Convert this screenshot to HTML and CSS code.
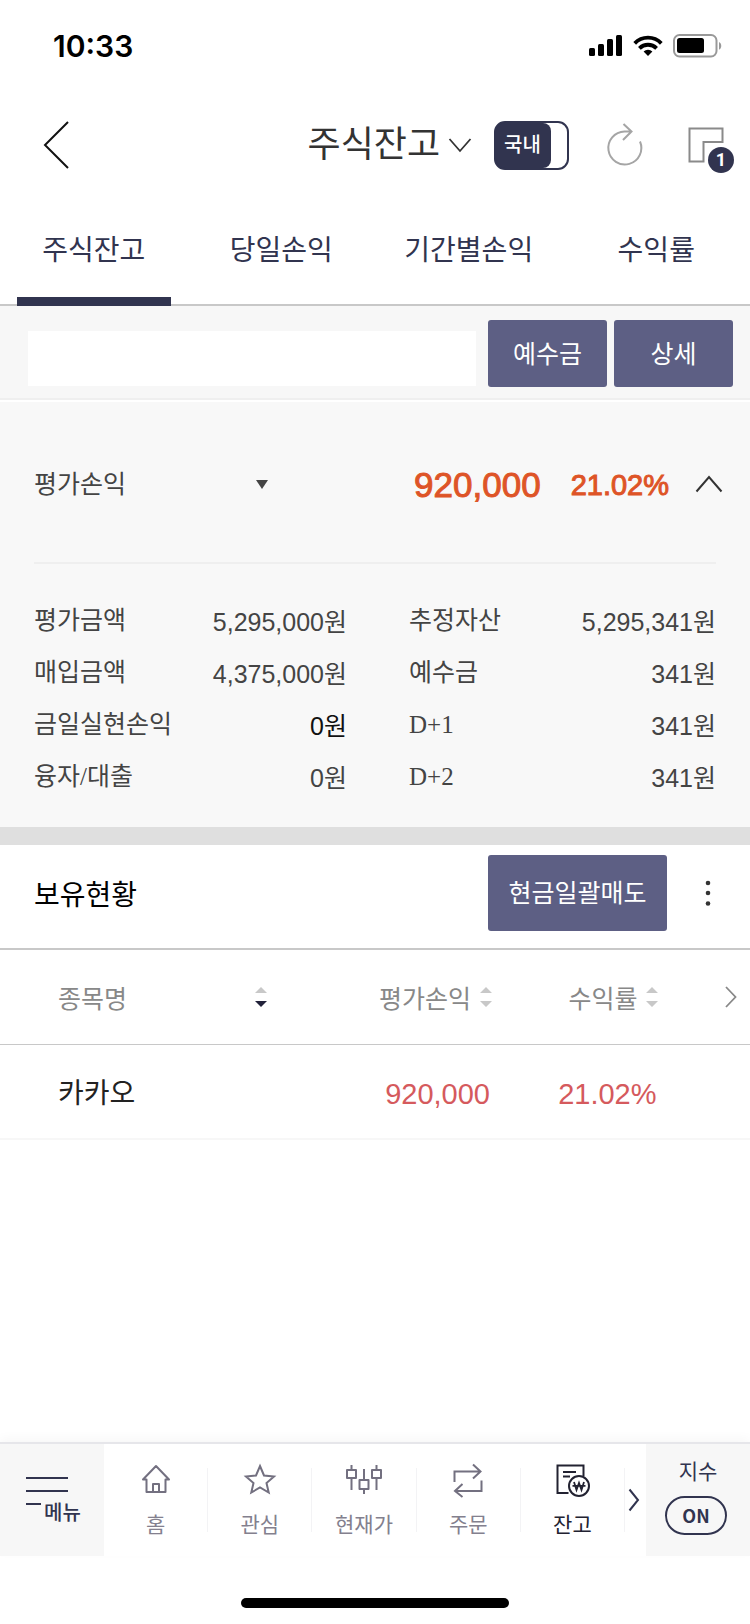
FILE: index.html
```html
<!DOCTYPE html>
<html lang="ko">

<head>
	<meta charset="UTF-8">
	<meta name="viewport" content="width=device-width, initial-scale=1.0">
	<title>주식잔고</title>
	<link rel="stylesheet" href="styles.css">
</head>

<body>
	<!-- Status bar -->
	<div class="status-bar">
		<span class="status-time">10:33</span>
		<div class="status-icons">
			<svg width="34" height="22" viewBox="0 0 34 22">
				<rect x="0" y="13" width="6" height="8" rx="1.5" />
				<rect x="9" y="9" width="6" height="12" rx="1.5" />
				<rect x="18" y="4" width="6" height="17" rx="1.5" />
				<rect x="27" y="0" width="6" height="21" rx="1.5" />
			</svg>
			<svg width="30" height="22" viewBox="0 0 30 22" fill="none" stroke="#000" stroke-width="3.8">
				<path d="M1.7 8.3a18.6 18.6 0 0 1 26.6 0" />
				<path d="M6.4 13.3a12.2 12.2 0 0 1 17.2 0" />
				<path d="M15 21l-4.4-4.5a6.4 6.4 0 0 1 8.8 0z" fill="#000" stroke="none" />
			</svg>
			<svg width="49" height="24" viewBox="0 0 49 24">
				<rect x="1" y="1" width="42.500" height="21.500" rx="5.500" fill="none" stroke="#999" stroke-width="2" />
				<rect x="4" y="4" width="27" height="15" rx="2.500" />
				<path d="M46 8c3 1.200 3 6.500 0 7.700z" fill="#999" />
			</svg>
		</div>
	</div>

	<!-- Header -->
	<header class="header">
		<button type="button" class="icon-btn back" aria-label="뒤로">
			<svg width="26" height="48" viewBox="0 0 26 48" fill="none" stroke="#111" stroke-width="2">
				<path d="M25 1L2 24l23 23" />
			</svg>
		</button>
		<button type="button" class="icon-btn title">
			<span>주식잔고</span>
			<svg width="24" height="16" viewBox="0 0 24 16" fill="none" stroke="#333" stroke-width="1.800">
				<path d="M1.500 2L12 14 22.500 2" />
			</svg>
		</button>
		<button type="button" class="market-switch" role="switch" aria-checked="true"><span>국내</span></button>
		<button type="button" class="icon-btn refresh" aria-label="새로고침">
			<svg width="36" height="44" viewBox="0 0 36 44" fill="none" stroke="#a5a5a5" stroke-width="2">
				<path d="M33 18.500A16.500 16.500 0 1 1 17.500 8.500h7M16.500 1l8 7.500-8.500 8.500" />
			</svg>
		</button>
		<button type="button" class="icon-btn windows" aria-label="화면목록">
			<svg width="36" height="36" viewBox="0 0 36 36" fill="none" stroke="#8a8a8a" stroke-width="2">
				<path d="M1.500 1.500h33v13.500H15.500V34.500h-14z" />
			</svg>
			<span class="badge">1</span>
		</button>
	</header>

	<!-- Tabs -->
	<nav class="tabs">
		<a href="#balance" class="tab active">주식잔고</a>
		<a href="#today" class="tab">당일손익</a>
		<a href="#period" class="tab">기간별손익</a>
		<a href="#rate" class="tab">수익률</a>
	</nav>

	<main>
		<form class="account">
			<input type="text" class="account-input" aria-label="계좌번호">
			<button type="button" class="btn">예수금</button>
			<button type="button" class="btn">상세</button>
		</form>

		<!-- Summary -->
		<section class="summary">
			<div class="summary-head">
				<div class="select-box">
					<select class="profit-select" aria-label="손익구분">
						<option>평가손익</option>
					</select>
					<svg width="12" height="9" viewBox="0 0 12 9" fill="#444">
						<path d="M0 0h12L6 9z" />
					</svg>
				</div>
				<span class="profit">920,000</span>
				<span class="rate">21.02%</span>
				<button type="button" class="icon-btn fold" aria-label="접기">
					<svg width="28" height="18" viewBox="0 0 28 18" fill="none" stroke="#333" stroke-width="2">
						<path d="M1.500 16.500L14 2l12.500 14.500" />
					</svg>
				</button>
			</div>
			<div class="summary-body">
				<dl class="summary-list">
					<div class="summary-row"><dt>평가금액</dt><dd>5,295,000원</dd></div>
					<div class="summary-row"><dt>매입금액</dt><dd>4,375,000원</dd></div>
					<div class="summary-row"><dt>금일실현손익</dt><dd class="flat">0원</dd></div>
					<div class="summary-row"><dt>융자/대출</dt><dd>0원</dd></div>
				</dl>
				<dl class="summary-list">
					<div class="summary-row"><dt>추정자산</dt><dd>5,295,341원</dd></div>
					<div class="summary-row"><dt>예수금</dt><dd>341원</dd></div>
					<div class="summary-row"><dt>D+1</dt><dd>341원</dd></div>
					<div class="summary-row"><dt>D+2</dt><dd>341원</dd></div>
				</dl>
			</div>
		</section>

		<!-- Holdings -->
		<section class="holdings">
			<div class="holdings-head">
				<h2>보유현황</h2>
				<button type="button" class="btn btn-sell">현금일괄매도</button>
				<button type="button" class="icon-btn more" aria-label="더보기">
					<svg width="6" height="26" viewBox="0 0 6 26" fill="#333">
						<circle cx="3" cy="3" r="2.300" />
						<circle cx="3" cy="13" r="2.300" />
						<circle cx="3" cy="23.500" r="2.300" />
					</svg>
				</button>
			</div>
			<table class="stock-table">
				<thead>
					<tr>
						<th class="col-name">
							<button type="button" class="sort">종목명
								<svg width="12" height="22" viewBox="0 0 12 22" fill="#c8c8c8">
									<path d="M0 7h12L6 1z" />
									<path d="M0 15h12l-6 6z" fill="#22223a" />
								</svg>
							</button>
						</th>
						<th class="col-profit">
							<button type="button" class="sort">평가손익
								<svg width="12" height="22" viewBox="0 0 12 22" fill="#c8c8c8">
									<path d="M0 7h12L6 1zM0 15h12l-6 6z" />
								</svg>
							</button>
						</th>
						<th class="col-rate">
							<button type="button" class="sort">수익률
								<svg width="12" height="22" viewBox="0 0 12 22" fill="#c8c8c8">
									<path d="M0 7h12L6 1zM0 15h12l-6 6z" />
								</svg>
							</button>
						</th>
						<th class="col-next">
							<button type="button" class="icon-btn" aria-label="다음 항목">
								<svg width="12" height="22" viewBox="0 0 12 22" fill="none" stroke="#888" stroke-width="1.800">
									<path d="M1 1l9.500 10L1 21" />
								</svg>
							</button>
						</th>
					</tr>
				</thead>
				<tbody>
					<tr>
						<td class="col-name">카카오</td>
						<td class="up">920,000</td>
						<td class="up">21.02%</td>
						<td></td>
					</tr>
				</tbody>
			</table>
		</section>
	</main>

	<!-- Bottom menu -->
	<nav class="bottom-nav">
		<button type="button" class="menu-btn">
			<span class="menu-line"></span>
			<span class="menu-line"></span>
			<span class="menu-last"><span class="menu-line"></span>메뉴</span>
		</button>
		<div class="nav-items">
			<a href="#home" class="nav-item">
				<svg width="36" height="36" viewBox="0 0 36 36" fill="none" stroke="#737080" stroke-width="2" stroke-linejoin="round">
					<path d="M5 18.500L18 5l13 13.500h-3.500V31h-19V18.500zM15 31v-8h6v8" />
				</svg>
				<span>홈</span>
			</a>
			<a href="#favorite" class="nav-item">
				<svg width="36" height="36" viewBox="0 0 36 36" fill="none" stroke="#737080" stroke-width="2">
					<path d="M18 5l4 9.500 10 1-7.500 6.500 2.200 9.500-8.700-5-8.700 5L11.500 22 4 15.500l10-1z" />
				</svg>
				<span>관심</span>
			</a>
			<a href="#price" class="nav-item">
				<svg width="36" height="36" viewBox="0 0 36 36" fill="none" stroke="#737080" stroke-width="2" stroke-linejoin="round">
					<path d="M5.500 4v5M5.500 17v12M1 9h9v8H1zM18 8v11M18 28v5M13.500 19h9v9h-9zM30.500 4v5M30.500 17v12M26 9h9v8h-9z" />
				</svg>
				<span>현재가</span>
			</a>
			<a href="#order" class="nav-item">
				<svg width="36" height="36" viewBox="0 0 36 36" fill="none" stroke="#737080" stroke-width="2">
					<path d="M4.500 21V10.500H30M23 3.500l7.500 7-7.500 7M31.500 19.500V30H6M12.500 23L5 30l7.500 6" />
				</svg>
				<span>주문</span>
			</a>
			<a href="#balance" class="nav-item active">
				<svg width="36" height="36" viewBox="0 0 36 36" fill="none" stroke="#222231" stroke-width="2">
					<path d="M14.500 32H3.500V4.500h26V15M9 11h13M9 15.500h7" />
					<circle cx="25" cy="25" r="10" />
					<path d="M20 21l2.500 8 2.500-7 2.500 7 2.500-8M18.500 24.800h13" stroke-width="1.800" />
				</svg>
				<span>잔고</span>
			</a>
		</div>
		<button type="button" class="icon-btn nav-next" aria-label="다음 메뉴">
			<svg width="12" height="24" viewBox="0 0 12 24" fill="none" stroke="#31344f" stroke-width="2">
				<path d="M1.500 1.500l8.500 10.500-8.500 10.500" />
			</svg>
		</button>
		<button type="button" class="index-btn" role="switch" aria-checked="true">
			<span>지수</span>
			<span class="pill">ON</span>
		</button>
	</nav>
	<div class="home-indicator"></div>
</body>

</html>
```
FILE: styles.css
```css
* {
	box-sizing: border-box;
}

body {
	display: flex;
	flex-direction: column;
	min-height: 100vh;
	margin: 0;
	background: #fff;
	color: #444;
	font-family: "Liberation Sans", "Noto Sans CJK KR", sans-serif;
	font-size: 25px;
}

button,
input,
select {
	margin: 0;
	padding: 0;
	border: 0;
	background: none;
	color: inherit;
	font: inherit;
}

button {
	cursor: pointer;
}

a {
	color: inherit;
	text-decoration: none;
}

svg {
	display: block;
	flex: none;
	overflow: visible;
}

/* status bar */
.status-bar {
	display: flex;
	justify-content: space-between;
	align-items: center;
	height: 91px;
	padding: 0 28px 0 53px;
}

.status-time {
	color: #000;
	font-family: Inter, sans-serif;
	font-size: 30px;
	font-weight: 600;
}

.status-icons {
	display: flex;
	align-items: center;
	gap: 10px;
}

/* header */
.header {
	display: flex;
	align-items: center;
	height: 108px;
	padding: 0 26px 0 43px;
}

.title {
	display: flex;
	align-items: center;
	gap: 8px;
	margin-left: auto;
	color: #333;
	font-size: 36px;
	line-height: 50px;
}

.market-switch {
	width: 75px;
	height: 49px;
	margin: 0 38px 0 22px;
	border: 2px solid #31344f;
	border-radius: 11px;
	background: linear-gradient(90deg, #31344f 50%, #fff 50%);
	overflow: hidden;
}

.market-switch span {
	display: block;
	width: 55px;
	padding-right: 2px;
	border-radius: 8px;
	background: #31344f;
	color: #fff;
	font-size: 20px;
	font-weight: 500;
	line-height: 45px;
}

.refresh {
	margin-right: 45px;
}

.windows {
	position: relative;
}

.badge {
	position: absolute;
	right: -10px;
	bottom: -10px;
	width: 26px;
	height: 26px;
	border-radius: 50%;
	background: #31344f;
	color: #fff;
	font-family: Roboto, sans-serif;
	font-size: 18px;
	font-weight: 700;
	line-height: 26px;
}

/* tabs */
.tabs {
	display: flex;
	height: 107px;
	border-bottom: 2px solid #c8c8c8;
}

.tab {
	flex: 1;
	height: 107px;
	margin: 0 17px;
	color: #31344f;
	font-size: 28px;
	line-height: 103px;
	text-align: center;
	white-space: nowrap;
}

.tab.active {
	border-bottom: 9px solid #31344f;
}

/* account row */
.account {
	display: flex;
	gap: 7px;
	height: 94px;
	padding: 14px 17px 0 28px;
	border-bottom: 2px solid #efefef;
	background: #f7f7f7;
}

.account-input {
	flex: 1;
	min-width: 0;
	height: 55px;
	margin: 11px 5px 0 0;
	background: #fff;
}

.btn {
	width: 119px;
	height: 67px;
	padding-bottom: 4px;
	border-radius: 3px;
	background: #5d5f84;
	color: #fff;
}

/* summary */
.summary {
	margin-top: 2px;
	padding: 0 34px 23px;
	border-bottom: 18px solid #dfdfdf;
	background: #f8f8f8;
}

.summary-head {
	display: flex;
	align-items: center;
	height: 162px;
	padding-top: 4px;
	border-bottom: 2px solid #efefef;
}

.select-box {
	display: grid;
	align-items: center;
	width: 234px;
	margin-right: auto;
}

.select-box > * {
	grid-area: 1 / 1;
}

.select-box svg {
	justify-self: end;
	pointer-events: none;
}

.profit-select {
	width: 100%;
	height: 48px;
	appearance: none;
}

.profit,
.rate {
	padding-top: 2px;
	color: #de5427;
	-webkit-text-stroke: 1px #de5427;
}

.profit {
	font-size: 35px;
}

.rate {
	margin: 0 26px 0 30px;
	font-size: 29px;
}

.fold {
	margin-right: -7px;
}

.summary-body {
	display: grid;
	grid-template-columns: 313fr 307fr;
	gap: 62px;
	padding-top: 32px;
}

.summary-list {
	margin: 0;
}

.summary-row {
	display: flex;
	justify-content: space-between;
	height: 52px;
	line-height: 50px;
}

.summary-row dt {
	font-family: "Liberation Serif", "Noto Sans CJK KR", serif;
}

.summary-row dd {
	margin: 0;
	line-height: 52px;
}

.summary-row .flat {
	color: #111;
}

/* holdings */
.holdings-head {
	display: flex;
	align-items: center;
	height: 105px;
	padding: 0 39px 8px 34px;
	border-bottom: 2px solid #c8c8c8;
}

.holdings-head h2 {
	margin: 0;
	color: #000;
	font-size: 28px;
	font-weight: 400;
}

.btn-sell {
	width: 179px;
	height: 76px;
	margin: 0 38px 0 auto;
}

.stock-table {
	width: 100%;
	border-collapse: collapse;
	table-layout: fixed;
}

.stock-table th,
.stock-table td {
	height: 95px;
	padding: 0;
	border-bottom: 2px solid #f7f7f7;
	font-weight: 400;
	text-align: right;
}

.stock-table th {
	height: 94px;
	border-bottom: 1px solid #c8c8c8;
	color: #888;
}

.stock-table .col-name {
	width: 35.6%;
	padding-left: 58px;
	text-align: left;
}

.col-profit {
	width: 30%;
}

.col-rate {
	width: 22.2%;
}

.stock-table .col-next {
	padding-right: 13px;
}

.col-next button {
	display: block;
	margin-left: auto;
}

.sort {
	display: inline-flex;
	align-items: center;
	gap: 9px;
}

.col-name .sort {
	display: flex;
	justify-content: space-between;
	width: 100%;
}

.stock-table td {
	color: #222;
	font-size: 28px;
}

.stock-table .up {
	padding: 6px 2px 0 0;
	color: #d55a5d;
	font-size: 29px;
}

/* bottom menu */
.bottom-nav {
	display: flex;
	height: 114px;
	margin-top: auto;
	border-top: 2px solid #e6e6ea;
	box-shadow: 0 -4px 10px rgba(0, 0, 0, 0.03);
	color: #31344f;
	font-size: 21px;
}

.menu-btn {
	display: flex;
	flex-direction: column;
	gap: 11px;
	width: 104px;
	padding: 33px 0 0 26px;
	background: #f7f7f7;
	font-size: 20px;
	font-weight: 500;
	line-height: 20px;
}

.menu-line {
	width: 42px;
	height: 2px;
	background: #31344f;
}

.menu-last {
	display: flex;
	gap: 3px;
}

.menu-last .menu-line {
	width: 15px;
}

.nav-items {
	display: flex;
	flex: 1;
}

.nav-item {
	display: flex;
	flex: 1;
	flex-direction: column;
	align-items: center;
	gap: 13px;
	height: 64px;
	margin-top: 24px;
	border-right: 1px solid #f3f3f5;
	color: #83808e;
	line-height: 30px;
}

.nav-item svg {
	margin-top: -7px;
}

.nav-item.active {
	color: #222231;
}

.nav-next {
	width: 21px;
	padding-left: 3px;
}

.index-btn {
	display: flex;
	flex-direction: column;
	align-items: center;
	gap: 9px;
	width: 104px;
	padding-top: 13px;
	background: #f7f7f7;
	line-height: 30px;
}

.pill {
	width: 62px;
	margin-right: 4px;
	border: 2px solid #31344f;
	border-radius: 20px;
	font-family: "Noto Sans CJK KR", sans-serif;
	font-size: 18px;
	font-weight: 700;
	line-height: 35px;
}

.home-indicator {
	width: 268px;
	height: 10px;
	margin: 42px auto 16px;
	border-radius: 5px;
	background: #000;
}
```
